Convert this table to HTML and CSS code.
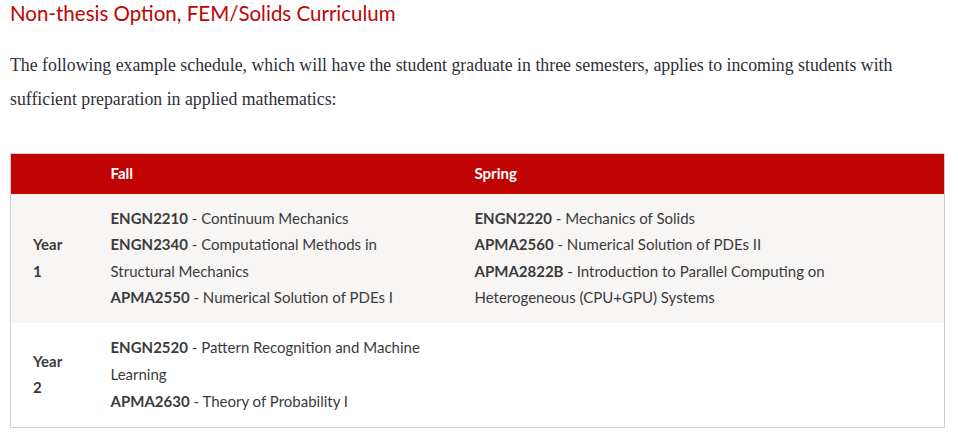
FILE: index.html
```html
<!DOCTYPE html>
<html lang="en">
<head>
<meta charset="utf-8">
<title>Non-thesis Option, FEM/Solids Curriculum</title>
<link rel="stylesheet" href="styles.css">
</head>
<body>
<main class="content">
  <h3 class="title">Non-thesis Option, FEM/Solids Curriculum</h3>
  <p class="intro">The following example schedule, which will have the student graduate in three semesters, applies to incoming students with sufficient preparation in applied mathematics:</p>
  <table class="schedule">
    <thead>
      <tr>
        <th class="col-year"></th>
        <th class="col-fall">Fall</th>
        <th class="col-spring">Spring</th>
      </tr>
    </thead>
    <tbody>
      <tr class="row-alt">
        <th class="year">Year<br>1</th>
        <td>
          <div class="course"><b>ENGN2210</b> - Continuum Mechanics</div>
          <div class="course"><b>ENGN2340</b> - Computational Methods in Structural Mechanics</div>
          <div class="course"><b>APMA2550</b> - Numerical Solution of PDEs I</div>
        </td>
        <td>
          <div class="course"><b>ENGN2220</b> - Mechanics of Solids</div>
          <div class="course"><b>APMA2560</b> - Numerical Solution of PDEs II</div>
          <div class="course"><b>APMA2822B</b> - Introduction to Parallel Computing on Heterogeneous (CPU+GPU) Systems</div>
        </td>
      </tr>
      <tr>
        <th class="year">Year<br>2</th>
        <td>
          <div class="course"><b>ENGN2520</b> - Pattern Recognition and Machine Learning</div>
          <div class="course"><b>APMA2630</b> - Theory of Probability I</div>
        </td>
        <td></td>
      </tr>
    </tbody>
  </table>
</main>
</body>
</html>
```
FILE: styles.css
```css
html, body {
  margin: 0;
  padding: 0;
  background: #ffffff;
}

.content {
  padding: 0 14px 0 10px;
}

.title {
  margin: 0;
  padding-top: 0;
  font-family: Lato, "Open Sans", sans-serif;
  font-weight: 400;
  font-size: 20.5px;
  line-height: 26px;
  color: #c00404;
}

.intro {
  margin: 22px 0 0 0;
  font-family: "Liberation Serif", serif;
  font-size: 17.8px;
  line-height: 34px;
  color: #2e3038;
}

.schedule {
  margin-top: 37px;
  width: 935px;
  border-collapse: collapse;
  border: 1px solid #d4d1c8;
  font-family: Lato, "Open Sans", sans-serif;
  font-size: 15px;
  line-height: 26.6px;
  color: #3b3b3d;
  table-layout: fixed;
}

.schedule thead th {
  background: #c00404;
  color: #ffffff;
  font-weight: 700;
  text-align: left;
  height: 40px;
  padding: 0 22px;
  box-sizing: border-box;
}

.col-year { width: 78px; }
.col-fall { width: 364px; }

.schedule tbody th,
.schedule tbody td {
  text-align: left;
  vertical-align: top;
  padding: 11px 22px 12.5px;
}

.schedule tbody th.year {
  vertical-align: middle;
  font-weight: 700;
}

.schedule b {
  font-weight: 700;
}

.row-alt {
  background: #f7f6f4;
}
```
